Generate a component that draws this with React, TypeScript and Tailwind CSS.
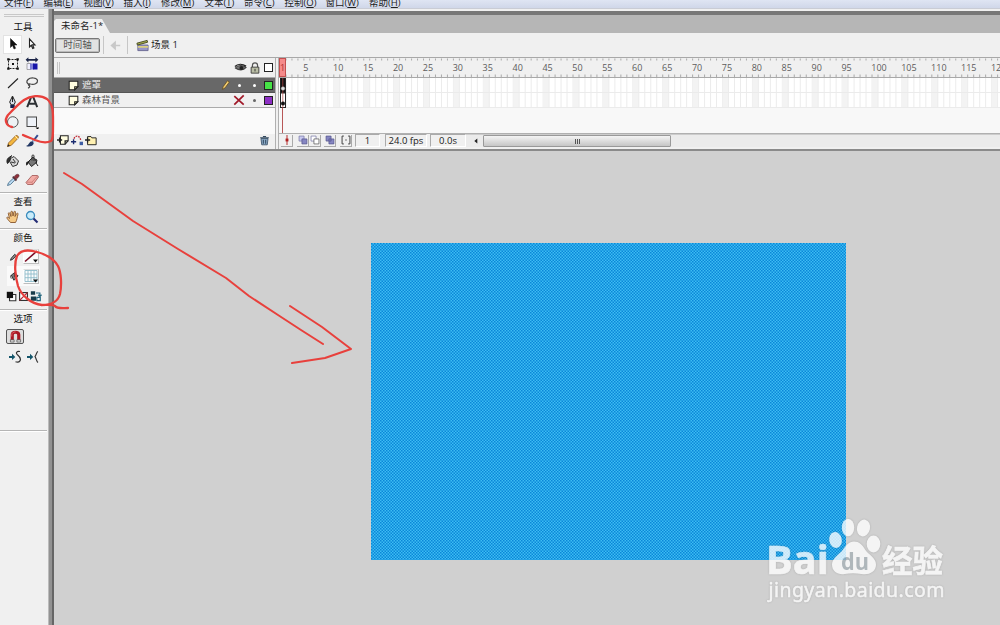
import type { ReactNode } from "react";
import clsx from "clsx";

const menus = [
  { label: "文件", k: "F", w: "w-[39.5px]" },
  { label: "编辑", k: "E", w: "w-[40px]" },
  { label: "视图", k: "V", w: "w-[40px]" },
  { label: "插入", k: "I", w: "w-[37.5px]" },
  { label: "修改", k: "M", w: "w-[43.5px]" },
  { label: "文本", k: "T", w: "w-[39.5px]" },
  { label: "命令", k: "C", w: "w-[40.5px]" },
  { label: "控制", k: "O", w: "w-[41px]" },
  { label: "窗口", k: "W", w: "w-[43.5px]" },
  { label: "帮助", k: "H", w: "w-[40px]" },
];

const layers = [
  { name: "遮罩", color: "bg-[#46e246]", active: true },
  { name: "森林背景", color: "bg-[#8d2fc4]", active: false },
];

// width of one timeline frame, and where frame 1 starts
const PITCH = 5.98;
const START = 1;
const frames = Array.from({ length: 121 }, (_, i) => i + 1);

function Icon({ children, size = 14 }: { children: ReactNode; size?: number }) {
  return (
    <svg width={size} height={size} viewBox="0 0 14 14" fill="none" stroke="#222" strokeWidth="1" className="block shrink-0">
      {children}
    </svg>
  );
}

const tools: ReactNode[] = [
  // selection
  <path d="M4.5 1.5v9l2-2 1.5 3.5 1.6-.7L8.2 8H11z" fill="#111" stroke="#111" strokeWidth=".5" />,
  // subselection
  <path d="M4.5 2v8l1.8-1.7 1.4 3.2 1.2-.5-1.3-3.1H10z" fill="#fff" strokeWidth="1.1" />,
  // free transform
  <>
    <rect x="2.5" y="2.5" width="9" height="9" strokeDasharray="2 1" />
    <path d="M1.2 1.2h2.4v2.4H1.2zM10.4 1.2h2.4v2.4h-2.4zM1.2 10.4h2.4v2.4H1.2zM10.4 10.4h2.4v2.4h-2.4zM6 6h2v2H6z" fill="#111" stroke="none" />
  </>,
  // gradient transform
  <>
    <path d="M.6 2.800 3.400.2v1.700h7V.2l3 2.600-3 2.600V3.700h-7v1.700z" fill="#1b2447" stroke="none" />
    <path d="M2 6.500h4v6H2z" fill="#f0f0ff" stroke="#777" strokeWidth=".6" />
    <path d="M5 6.500h4v6H5z" fill="#7d7fd8" stroke="none" />
    <path d="M8 6.500h4.500v6H8z" fill="#1715a8" stroke="none" />
  </>,
  <path d="M2 12 12 2.500" strokeWidth="1.100" />,
  // lasso
  <path d="M5 8.500C1.500 8 1 5.500 3 3.500c2.500-2.400 9-2 9.500 1 .4 2.800-3.400 4.500-7 3.500-1.700-.7-2.800.6-1.500 1.400 1.600.8.4 1.600-.8 2.900" strokeWidth="1.200" stroke="#444" />,
  // pen
  <>
    <path d="M6.500 1 9.300 7 8 9.800H5L3.700 7z" fill="#d8dce8" />
    <path d="M6.500 2v5" />
    <path d="M4.300 10h4.400v3H4.300z" fill="#17214f" stroke="none" />
  </>,
  // text
  <path d="M2.200 12.200 6.200 2h2l4 10.200M4.200 8.800h6" strokeWidth="2" stroke="#2c3034" />,
  // oval
  <circle cx="6.800" cy="7" r="5.300" fill="#eef2f5" stroke="#555" />,
  // rectangle
  <>
    <rect x="2" y="2" width="9.500" height="9.500" fill="#eef2f8" stroke="#444" />
    <path d="M10.500 12.500h4L12.500 14.500z" fill="#000" stroke="none" />
  </>,
  // pencil
  <>
    <path d="m1.500 12.500 1-3.600 7.200-7.200c1.500-.8 3.300.8 2.500 2.400l-7 7.300z" fill="#f3b63f" stroke="#8b571b" strokeWidth=".8" />
    <path d="m9.200 2.200 2.600 2.600" stroke="#fff0bc" />
    <path d="m1.300 12.700.9-2.500 1.700 1.600z" fill="#222" stroke="none" />
  </>,
  // brush
  <>
    <path d="m12.800 1.200-5 6.300" stroke="#334d91" strokeWidth="2" />
    <path d="m8.200 6.200 1.500 1.300" stroke="#b9d1ee" strokeWidth="2" />
    <path d="M7.500 7.200C4 7 4.500 11 1 12c3 1.300 7.300.3 7.800-3z" fill="#203663" stroke="none" />
  </>,
  // ink bottle
  <>
    <path d="m4.500 4.500 3.500-2 4.500 4.500-1.500 4-4.300 1.500-3-5z" fill="#d6d6d6" stroke="#333" />
    <path d="M6 1.500 3 3.500C.5 5 .7 8 1.500 9.500 3 9 3.500 6 4.500 4.500" fill="#333" />
    <path d="m7 5 2.500 3.500M5 8l4 1" stroke="#333" />
  </>,
  // paint bucket
  <>
    <path d="m3 8 5-5 4 5-5.500 4.500z" fill="#777" stroke="#222" />
    <path d="M7 6.500V2c0-1.500 2-1.500 2 0v5" stroke="#333" />
    <path d="M3.500 7.500C1 7.500.8 9 1.200 11.500 3.500 11 3 9 5 7z" fill="#222" stroke="none" />
    <path d="m10 5 2 1-1 3 2 3" strokeWidth="1" />
  </>,
  // eyedropper
  <>
    <path d="m1.500 12.500 1-2.700L7.600 5l1.600 1.600-4.600 4.800z" fill="#bcdcf4" stroke="#4c728d" strokeWidth=".9" />
    <path d="m6.800 3.700 3.700 3.800" stroke="#54323c" strokeWidth="1.800" />
    <path d="M8 4.500C8.500 2 11.500.5 12.700 1.700S12 5.400 9.700 6z" fill="#8e3039" stroke="#54323c" strokeWidth=".6" />
  </>,
  // eraser
  <>
    <path d="M1 9.500 7 2.500h5.500l1 1.500L8 11.500H2.500z" fill="#f2aca6" stroke="#a8605d" strokeWidth=".9" />
    <path d="M1.500 9.200h5.300l6-6.500M6.800 9.200l1 2.200" stroke="#c97873" strokeWidth=".8" />
  </>,
];

function Toolbox() {
  return (
    <aside className="flex h-[616px] w-[48px] shrink-0 flex-col bg-[#f0f0f0]">
      <div className="ml-1 mt-[5px] h-[3px] w-10 border-y border-[#c8c8c8]" />
      <Title className="mt-[1.5px]">工具</Title>
      <div className="mt-[1px] grid grid-cols-[19px_19px] auto-rows-[19.4px] pl-[3px]">
        {tools.map((tool, i) => (
          <div key={i} className={clsx("flex items-center justify-center", i === 0 && "border border-[#e2e2e2] bg-white")}>
            <Icon size={14}>{tool}</Icon>
          </div>
        ))}
      </div>
      <Rule className="mt-[2.5px]" />
      <Title>查看</Title>
      <div className="-mt-px flex h-[17px] items-center gap-[5px] pl-[6px]">
        <Icon>
          <path d="M4.500 12.500C3 10.500 1 9 .8 7.500c.7-.9 2 .3 2.700 1L2.300 3.500c.2-1.200 1.300-1 1.600 0L5 6.500 4.800 2c.4-1.100 1.600-.9 1.700 0L7 6l1-4.200c.5-1 1.600-.6 1.500.4L9 6.500l1.700-3c.7-.7 1.600-.2 1.300.7-.8 3-1 6-2.500 8.300z" fill="#f5c985" stroke="#87552b" strokeWidth=".9" />
        </Icon>
        <Icon>
          <circle cx="5.500" cy="5.500" r="4" fill="#c9ecfa" stroke="#3c8cbd" strokeWidth="1.300" />
          <path d="m8.500 8.500 4 4" stroke="#252d76" strokeWidth="2.200" />
        </Icon>
      </div>
      <Rule className="mt-[3px]" />
      <Title>颜色</Title>
      <div className="mt-px flex h-[20px] items-center gap-[4px] pl-[7px]">
        <Icon size={12}>
          <path d="m4 12 1-2.500L9 5l2 1.800L6.500 11z" fill="#888" />
        </Icon>
        <Swatch>
          <path d="M1 12.500 13 2" stroke="#7d0c24" strokeWidth="1.600" />
        </Swatch>
      </div>
      <div className="ml-[7px] flex h-[20px] w-[33px] items-center gap-[4px] bg-[#fafafa]">
        <Icon size={12}>
          <path d="m5 6 4-3 4 4-5 5z" fill="#777" />
          <path d="M9 8V3M5 6c-1.500 1-.5 2.500 0 4" />
        </Icon>
        <Swatch>
          <path d="M1 1.500h12v11H1zM1 5h12M1 8.700h12M4 1.500v11M7 1.500v11M10 1.500v11" stroke="#8fbccb" strokeWidth=".9" />
        </Swatch>
      </div>
      <div className="flex h-[20px] items-center gap-[1px] pl-[6px]">
        <Icon size={11}>
          <path d="M4.500 4.500h8v8h-8z" fill="#fff" stroke="#333" strokeWidth="1.400" />
          <path d="M1 1h8v8H1z" fill="#111" stroke="none" />
        </Icon>
        <Icon size={11}>
          <rect x="2" y="2" width="10" height="10" fill="#fff" stroke="#333" strokeWidth="1.500" />
          <path d="M2 12 12 2" stroke="#b32131" strokeWidth="1.600" />
        </Icon>
        <Icon size={12}>
          <path d="M1 1.500h5v4H1zM1 7.500h6v5H1z" fill="#183b49" stroke="none" />
          <path d="M7 3.500h4.500v3M13.500 5.500l-2 2-2-2M8 8.500h4v4H8z" stroke="#24667e" strokeWidth="1.400" />
        </Icon>
      </div>
      <Rule className="mt-[3px]" />
      <Title>选项</Title>
      <div className="ml-[6px] mt-[3px] flex h-[15px] w-[18px] items-center justify-center rounded-[2px] border border-[#555] bg-[#dedede]">
        <Icon size={13}>
          <path d="M3.500 11V5c0-3.500 7-3.500 7 0v6" stroke="#a91824" strokeWidth="3.400" />
          <path d="M1.500 10.500h4v2.500h-4zM8.500 10.500h4v2.500h-4z" fill="#ddd" stroke="#333" strokeWidth=".6" />
          <path d="M3 7V5c0-2 2-3 4-3" stroke="#e6646d" />
        </Icon>
      </div>
      <div className="mt-[5px] flex h-4 items-center gap-[4px] pl-[8px]">
        <Icon>
          <Arrow />
          <path d="M12 1.500C8.500.8 7.500 3 9.500 4.800c2 1.700 4 3.700 2.500 6-1 1.500-3 1.500-4.500 1" stroke="#333" strokeWidth="1.200" />
        </Icon>
        <Icon>
          <Arrow />
          <path d="M12 1.500C10.500 2 10.500 4.500 9 6.500c1.500 2.500 1.500 5 3 6" stroke="#333" strokeWidth="1.200" />
        </Icon>
      </div>
      <Rule className="mt-[65px]" />
    </aside>
  );
}

function Arrow() {
  return <path d="M1 6h3V3.800L7.300 7 4 10V8H1z" fill="#14566b" stroke="none" />;
}

function Title({ children, className }: { children: ReactNode; className?: string }) {
  return <div className={clsx("h-[15px] w-[46px] shrink-0 text-center text-[9.5px] leading-[15px] text-[#111]", className)}>{children}</div>;
}

function Rule({ className }: { className?: string }) {
  return <div className={clsx("h-[2px] w-[47px] shrink-0 border-b border-t border-b-white border-t-[#b5b5b5]", className)} />;
}

function Swatch({ children }: { children: ReactNode }) {
  return (
    <div className="flex h-[15px] w-[16px] items-center justify-center border border-[#bdbdbd] border-l-white border-t-[#ddd] bg-[#fbfbfb]">
      <Icon size={14}>
        {children}
        <path d="M9 10.500h5l-2.500 3z" fill="#111" stroke="none" />
      </Icon>
    </div>
  );
}

function LayerIcon() {
  return (
    <Icon size={11}>
      <path d="M1.500 1.500h11v7l-4 4h-7z" fill="#fffde0" strokeWidth="1.300" />
      <path d="M8.500 12.500v-4h4z" fill="#d6cf87" strokeWidth="1.300" />
    </Icon>
  );
}

function LayerPane() {
  return (
    <div className="flex w-[221px] shrink-0 flex-col">
      <div className="flex h-[20px] items-center border-b border-[#a8a8a8] bg-[#f0f0f0] pl-[3px]">
        <div className="h-[12px] w-[3px] border-x border-[#c4c4c4]" />
        <div className="ml-[174px] flex items-center gap-[2px]">
          <Icon size={13}>
            <path d="M1.500 7.500C4 4 10 4 13 7 10 10.500 5 10 1.500 7.500z" fill="#777" stroke="#444" strokeWidth="1.200" />
            <circle cx="8" cy="7.500" r="2.200" fill="#222" stroke="none" />
            <path d="M1 6C4 3 9 3 13 5.500" strokeWidth="1.400" />
          </Icon>
          <Icon size={12}>
            <path d="M4 6V4c0-4 6-4 6 0v2" stroke="#555" strokeWidth="1.400" />
            <path d="M2.500 6h9v7h-9z" fill="#b9bda5" stroke="#333" />
            <path d="M7 8v3" />
          </Icon>
          <div className="ml-px h-[9px] w-[9px] border-[1.5px] border-[#222] bg-white" />
        </div>
      </div>
      {layers.map((layer) => (
        <div
          key={layer.name}
          className={clsx(
            "flex h-[15px] items-center border-b pl-[14px] text-[9.5px] leading-[14px]",
            layer.active ? "border-[#555] bg-[#686868] text-[#eee]" : "border-[#aaa] bg-[#f0f0f0] text-[#555]",
          )}
        >
          <LayerIcon />
          <span className="ml-[3px] w-[135px]">{layer.name}</span>
          <div className="flex w-[28px] items-center justify-end">
            {layer.active ? (
              <>
                <Icon size={11}>
                  <path d="m3 12 1-3.500L9.500 1 12 2.500 6.500 10z" fill="#f4cf70" stroke="#61491f" />
                </Icon>
                <span className="ml-[7px] mr-[4px] h-[3px] w-[3px] rounded-full bg-white" />
              </>
            ) : (
              <Icon size={12}>
                <path d="m1.500 2.500 11 10M12.500 1.500l-11 11" stroke="#a01828" strokeWidth="2" />
              </Icon>
            )}
          </div>
          <span className={clsx("ml-[8px] h-[3px] w-[3px] rounded-full", layer.active ? "bg-white" : "bg-[#666]")} />
          <span className={clsx("ml-[8px] h-[9px] w-[9px] border border-[#222]", layer.color)} />
        </div>
      ))}
      <div className="flex-1 bg-[#fafafa]" />
      <div className="flex h-[15px] items-center gap-[2px] bg-[#f0f0f0] pb-[3px] pl-[3px]">
        <Icon size={12}>
          <path d="M4 2h9v6l-3.500 4H4z" fill="#fffde0" strokeWidth="1.200" />
          <path d="M9.500 12V8H13M0 7h6M3 4v6" strokeWidth="1.500" />
        </Icon>
        <Icon size={12}>
          <path d="M3.500 5.500C5 1 10.500 1 11.500 8" stroke="#be2632" strokeDasharray="2 1.200" strokeWidth="1.500" />
          <path d="M0 9h6M3 6v6" stroke="#1b2c70" strokeWidth="1.600" />
          <path d="M10 9h4v4h-4z" fill="#3e5ea4" stroke="none" />
        </Icon>
        <Icon size={12}>
          <path d="M3 3h4l1 1.500h5v8H3z" fill="#fff1b2" strokeWidth="1.100" />
          <path d="M0 7h6M3 4v6" strokeWidth="1.500" />
        </Icon>
        <div className="ml-[160px]">
          <Icon size={11}>
            <path d="M2.500 4.500h9l-1 8h-7z" fill="#8aa9c7" stroke="#32485e" />
            <path d="M1.500 3.500h11M5 2h4M5.500 6v5M8.500 6v5" stroke="#32485e" strokeWidth="1.300" />
          </Icon>
        </div>
      </div>
    </div>
  );
}

function Ruler() {
  return (
    <div className="relative h-[20px] overflow-hidden border-b border-[#a8a8a8] bg-[#f0f0f0]">
      <svg className="block h-[19px] w-[724px]" viewBox="0 0 724 19">
        {frames.map((n) => (
          <path key={n} d={`M${START + n * PITCH} .5v2M${START + n * PITCH} 16.500v2.500`} stroke="#aaa" strokeWidth="1" />
        ))}
      </svg>
      {frames
        .filter((n) => n % 5 === 0)
        .map((n) => (
          <span key={n} className="absolute top-[3px] text-[9px] leading-[14px] text-[#5c5c5c]" style={{ left: START - 0.7 + (n - 1) * PITCH }}>
            {n}
          </span>
        ))}
      <div className="absolute left-0 top-0 h-[19px] w-[7px] border border-[#c25050] bg-[#f58a8a] text-center text-[9px] leading-[18px] text-[#a33]">1</div>
    </div>
  );
}

function FrameRow({ active }: { active: boolean }) {
  return (
    <div className="h-[15px]">
      <svg className="block h-[15px] w-[724px]" viewBox="0 0 724 15">
        <rect width="724" height="15" fill="#fff" />
        {frames.map((n) => (
          <g key={n}>
            {n % 5 === 0 && <rect x={START + (n - 1) * PITCH} width={PITCH} height="15" fill="#f3f3f3" />}
            <path d={`M${START + n * PITCH} 0v15`} stroke="#ececec" />
          </g>
        ))}
        <path d="M0 14.500h724" stroke="#ebebeb" />
        <rect x="1.500" y="0" width="5" height="14.500" fill={active ? "#111" : "#fff"} stroke="#222" />
        <path d="M3.800 0v15" stroke="#bc4b4b" strokeWidth=".7" />
        <circle cx="4" cy="10.500" r="1.800" fill={active ? "#ddd" : "#111"} stroke={active ? "#aaa" : "#111"} strokeWidth=".5" />
      </svg>
    </div>
  );
}

function Cell({ children, className }: { children: ReactNode; className: string }) {
  return (
    <div className={clsx("flex h-[13px] shrink-0 items-center justify-center border border-b-white border-l-[#aaa] border-r-white border-t-[#aaa] text-[9.5px] leading-[12px] text-[#222]", className)}>
      {children}
    </div>
  );
}

function FrameButton({ children, className }: { children: ReactNode; className?: string }) {
  return (
    <div className={clsx("flex h-[12px] w-[12px] shrink-0 items-center justify-center border-b border-r border-[#aaa]", className)}>
      <Icon size={10}>{children}</Icon>
    </div>
  );
}

function FramePane() {
  return (
    <div className="flex w-[724px] shrink-0 flex-col">
      <Ruler />
      {layers.map((layer) => (
        <FrameRow key={layer.name} active={layer.active} />
      ))}
      <div className="flex-1 bg-[#f8f8f8] pl-[3px]">
        <div className="h-full w-px bg-[#b85757]" />
      </div>
      <div className="flex h-[16px] items-center border-t border-[#b0b0b0] bg-[#f0f0f0] pb-[2px] pl-[2px]">
        <FrameButton>
          <path d="M7 0v14" stroke="#b02020" strokeWidth="1.300" />
          <path d="M5 5h4v4H5z" fill="#b02020" stroke="none" />
        </FrameButton>
        <FrameButton className="ml-[4px]">
          <path d="M1.500 1.500h7v7h-7z" fill="#c9c9ef" stroke="#7777a5" />
          <path d="M5.500 5.500h7v7h-7z" fill="#8686c2" stroke="#55558b" />
        </FrameButton>
        <FrameButton>
          <path d="M1.500 1.500h7v7h-7z" fill="#fff" stroke="#7777a5" />
          <path d="M5.500 5.500h7v7h-7z" fill="#fff" stroke="#555" />
        </FrameButton>
        <FrameButton className="ml-[3px]">
          <path d="M1.500 1.500h7v7h-7zM5.500 5.500h7v7h-7z" fill="#8686c2" stroke="#55558b" />
        </FrameButton>
        <FrameButton className="ml-[4px]">
          <path d="M4 1.500H1.500v11H4M10 1.500h2.500v11H10M6 7h2" stroke="#444" strokeWidth="1.400" />
        </FrameButton>
        <Cell className="ml-[3px] w-[25px]">1</Cell>
        <Cell className="ml-[5px] w-[42px]">24.0 fps</Cell>
        <Cell className="ml-[3px] w-[36px]">0.0s</Cell>
        <div className="flex h-[13px] flex-1 items-center border-t border-[#ccc] bg-[#ebebeb]">
          <div className="flex w-[17px] justify-center pl-[2px]">
            <Icon size={6}>
              <path d="M10 1v12L3 7z" fill="#222" stroke="none" />
            </Icon>
          </div>
          <div className="flex h-[12px] w-[188px] items-center justify-center rounded-[1px] border border-[#999] bg-gradient-to-b from-[#f4f4f4] to-[#c6c6c6]">
            <div className="flex gap-px">
              <i className="h-[5px] w-px bg-[#555]" />
              <i className="h-[5px] w-px bg-[#555]" />
              <i className="h-[5px] w-px bg-[#555]" />
            </div>
          </div>
        </div>
      </div>
    </div>
  );
}

function DocumentArea() {
  return (
    <section className="mt-[2px] flex h-[614px] flex-1 flex-col overflow-hidden border-t-[4px] border-[#777] bg-[#d0d0d0]">
      <div className="flex h-[18px] shrink-0 items-end bg-[#b6b6b6]">
        <div className="flex h-[14px] w-[56px] items-center bg-[#f0f0f0] pl-[7px] text-[9.5px] leading-none text-[#222] [clip-path:polygon(0_2px,2px_0,48px_0,100%_100%,0_100%)]">
          <span className="whitespace-nowrap">未命名-1*</span>
        </div>
      </div>
      <div className="flex h-[24px] shrink-0 items-center bg-[#f0f0f0] pl-[1px]">
        <div className="flex h-[15px] w-[45px] items-center justify-center rounded-[2px] border border-[#777] bg-[#e2e2e2] text-[9.5px] text-[#555] shadow-[inset_0_0_0_1px_#bbb]">
          时间轴
        </div>
        <div className="ml-[3px] flex h-[18px] w-[25px] items-center justify-center border-x border-[#c6c6c6]">
          <Icon size={11}>
            <path d="M13 7H4M6.500 3 2 7l4.500 4z" fill="#c8c8c8" stroke="#c8c8c8" strokeWidth="2" />
          </Icon>
        </div>
        <div className="ml-[8px]">
          <Icon size={13}>
            <path d="M2 6.500h11v6H2z" fill="#9796c8" stroke="#6a6992" />
            <path d="M1 4.500 12 1.500l.5 2L1.500 6.500z" fill="#a9b04c" stroke="#44471f" />
            <path d="M2 8.500h11" stroke="#eee06d" strokeWidth="1.500" />
          </Icon>
        </div>
        <span className="ml-[2px] text-[9.5px] text-[#222]">场景&nbsp;1</span>
      </div>
      <div className="flex h-[94px] shrink-0 overflow-hidden border-b-2 border-t border-b-[#8a8a8a] border-t-[#a8a8a8] bg-[#f0f0f0]">
        <LayerPane />
        <div className="w-[4px] shrink-0 border-x border-[#b0b0b0] bg-[#f0f0f0]" />
        <FramePane />
      </div>
      <div className="flex flex-1 bg-[#d0d0d0] pl-[317px] pt-[92px]">
        <Stage />
      </div>
    </section>
  );
}

function Stage() {
  return (
    <svg className="block h-[317px] w-[475px]" viewBox="0 0 475 317">
      <defs>
        <pattern id="dots" width="3" height="3" patternUnits="userSpaceOnUse">
          <path d="M0 0h1.500v1.500H0zM1.500 1.500H3V3H1.500z" fill="#0a86d8" />
        </pattern>
      </defs>
      <rect width="475" height="317" fill="#3dbdf2" />
      <rect width="475" height="317" fill="url(#dots)" />
    </svg>
  );
}

function Watermark() {
  return (
    <svg
      className="pointer-events-none absolute left-[760px] top-[510px] h-[100px] w-[190px] drop-shadow-[0_0_1px_rgba(90,90,90,0.35)]"
      viewBox="760 510 190 100"
      fill="#fff"
      opacity=".78"
    >
      <text x="766" y="573.500" fontSize="39" fontWeight="700" textLength="63" lengthAdjust="spacingAndGlyphs" stroke="#fff" strokeWidth=".6" className="font-['Open_Sans',sans-serif]">
        Bai
      </text>
      <ellipse cx="835.500" cy="540" rx="6.300" ry="8" transform="rotate(-12 835.500 540)" />
      <ellipse cx="848" cy="527.500" rx="6.200" ry="8.700" />
      <ellipse cx="863.500" cy="528" rx="6.500" ry="8.500" transform="rotate(12 863.500 528)" />
      <ellipse cx="873.500" cy="544" rx="6.800" ry="8.500" />
      <path d="M854 541.500c-5 0-8 4-11 8-3 4.500-11 8.500-11 15 0 7 6 10.500 12.500 9.500 6-1 11-1 17 0 7.500 1.200 14.500-2 14.500-9.500 0-7-8-10-11-15-2.500-4.500-6-8-11-8z" />
      <text x="841" y="569.500" fontSize="24" fontWeight="700" textLength="28" lengthAdjust="spacingAndGlyphs" fill="#a7b0b6" className="font-['Open_Sans',sans-serif]">
        du
      </text>
      <text x="882" y="571.500" fontSize="31" fontWeight="700" textLength="61" lengthAdjust="spacingAndGlyphs" stroke="#fff" strokeWidth=".6" className="font-['Noto_Sans_CJK_SC',sans-serif]">
        经验
      </text>
      <text x="768.500" y="597" fontSize="19.500" textLength="176" stroke="#fff" strokeWidth=".5" className="font-['Noto_Sans',sans-serif]">
        jingyan.baidu.com
      </text>
    </svg>
  );
}

// hand-drawn red marks over the workspace
function Marks() {
  return (
    <svg className="pointer-events-none absolute inset-0 h-[625px] w-[1000px]" viewBox="0 0 1000 625" fill="none" stroke="#e8403c" strokeWidth="2.300" strokeLinecap="round" strokeLinejoin="round">
      <path d="M12 127c-6-1-8-7-4-12 5-5 9-10 16-15 6-4 16-6 23-1 7 6 6 16 6 26 0 8 0 15-2 16-4 2-11 1-16-1-4-2-8-3-12-5" />
      <path d="M37 252c-7-2-16-3-20 4-3 7-2 20 1 30 3 9 13 18 24 19 8 0 16-3 18-11 2-10 1-22-2-28-4-7-13-12-21-14M41 305c6 0 12-1 14 1 2 3 8 2 13 2" />
      <path d="m64 173 18 11 51 37 45 28 48 29 23 18 29 19 23 15 22 14M290 306l32 21 29 22-26 9-33 5" strokeWidth="2" />
    </svg>
  );
}

export default function App() {
  return (
    <div className="relative h-[625px] w-[1000px] overflow-hidden bg-[#f0f0f0] font-['Open_Sans','Noto_Sans_CJK_SC',sans-serif]">
      <nav className="flex h-[9px] items-start overflow-hidden border-b border-[#c9ccd5] bg-gradient-to-b from-[#dfe5f3] to-[#d0d7e9] pl-[4px] text-[9.5px] leading-[14px] text-[#222]">
        {menus.map((m) => (
          <span key={m.k} className={clsx("-mt-[4px] shrink-0 whitespace-nowrap", m.w)}>
            {m.label}(<u>{m.k}</u>)
          </span>
        ))}
      </nav>
      <div className="flex">
        <Toolbox />
        <div className="h-[616px] w-[6px] shrink-0 border-l border-r-2 border-l-[#bbb] border-r-[#666] bg-[#929292]" />
        <DocumentArea />
      </div>
      <Watermark />
      <Marks />
    </div>
  );
}
